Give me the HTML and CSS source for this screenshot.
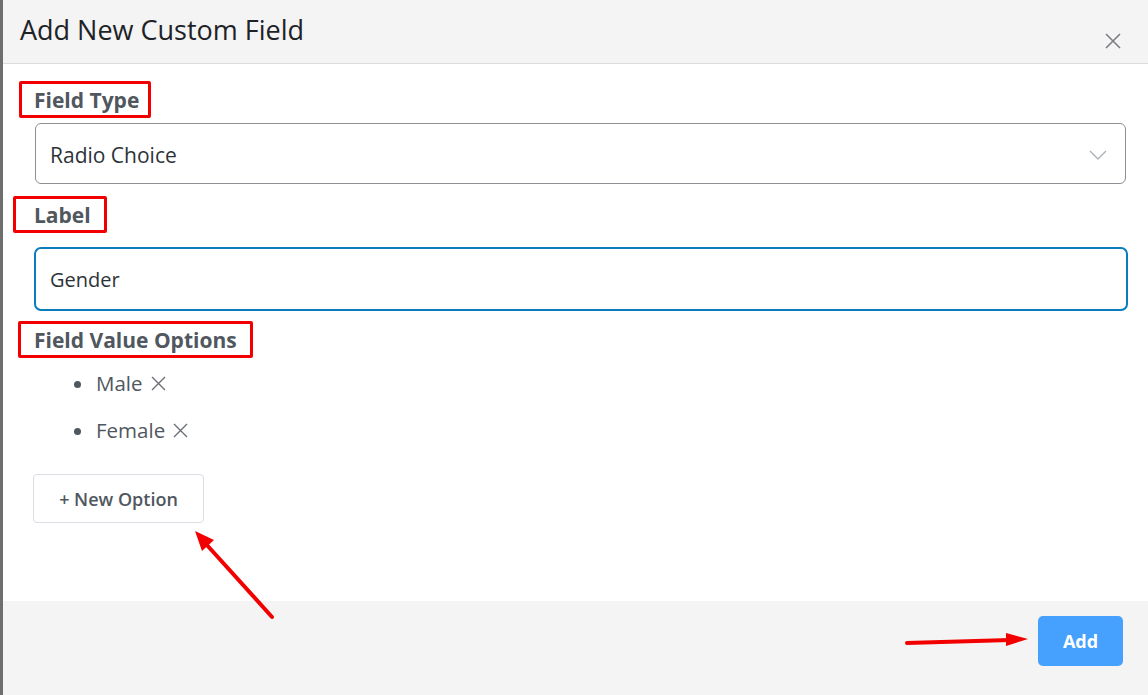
FILE: index.html
```html
<!DOCTYPE html>
<html lang="en">
<head>
<meta charset="utf-8">
<title>Add New Custom Field</title>
<link rel="stylesheet" href="styles.css">
</head>
<body>
<div class="screen">
  <div class="backdrop-edge"></div>
  <div class="modal">
    <header class="modal-header">
      <h1 class="modal-title">Add New Custom Field</h1>
      <button class="close-btn" aria-label="Close">
        <svg width="18" height="18" viewBox="0 0 18 18"><path d="M2 2L16 16M16 2L2 16" stroke="#7b7f85" stroke-width="1.6" fill="none"/></svg>
      </button>
    </header>
    <main class="modal-body">
      <div class="field-label label-type"><span class="mark mark-type"></span>Field Type</div>
      <div class="select">
        <span class="select-value">Radio Choice</span>
        <svg class="chevron" width="18" height="10" viewBox="0 0 18 10"><path d="M1 1L9 9L17 1" stroke="#a9b4bd" stroke-width="1.4" fill="none"/></svg>
      </div>
      <div class="field-label label-label"><span class="mark mark-label"></span>Label</div>
      <div class="text-input">Gender</div>
      <div class="field-label label-options"><span class="mark mark-options"></span>Field Value Options</div>
      <ul class="options">
        <li class="option">Male <svg class="remove" width="15" height="15" viewBox="0 0 15 15"><path d="M1 1L14 14M14 1L1 14" stroke="#6b7076" stroke-width="1.4" fill="none"/></svg></li>
        <li class="option">Female <svg class="remove" width="15" height="15" viewBox="0 0 15 15"><path d="M1 1L14 14M14 1L1 14" stroke="#6b7076" stroke-width="1.4" fill="none"/></svg></li>
      </ul>
      <button class="new-option">+ New Option</button>
    </main>
    <footer class="modal-footer">
      <button class="add-btn">Add</button>
    </footer>
  </div>
  <svg class="annotations" width="1148" height="695" viewBox="0 0 1148 695">
    <line x1="272" y1="617" x2="206" y2="544" stroke="#f20000" stroke-width="4" stroke-linecap="round"/>
    <polygon points="195,531 214,540 202,551" fill="#f20000"/>
    <line x1="907" y1="643" x2="1010" y2="640" stroke="#f20000" stroke-width="4" stroke-linecap="round"/>
    <polygon points="1028,639 1006,633 1006,646" fill="#f20000"/>
  </svg>
</div>
</body>
</html>
```
FILE: styles.css
```css
* { box-sizing: border-box; }
html, body { margin: 0; padding: 0; }
body {
  font-family: "Open Sans", "Noto Sans", sans-serif;
  background: #fff;
  width: 1148px;
  height: 695px;
  overflow: hidden;
}
.screen {
  position: relative;
  display: flex;
  width: 1148px;
  height: 695px;
}
.backdrop-edge {
  width: 3px;
  background: #6e6e6e;
  flex: none;
}
.modal {
  flex: 1;
  display: flex;
  flex-direction: column;
  background: #fff;
}
.modal-header {
  height: 64px;
  flex: none;
  background: #f4f4f4;
  border-bottom: 1px solid #dcdcde;
  display: flex;
  justify-content: space-between;
  align-items: flex-start;
  padding: 0 26px 0 17px;
}
.modal-title {
  margin: 12px 0 0;
  font-size: 27px;
  font-weight: 400;
  color: #1d2327;
  line-height: 36px;
}
.close-btn {
  margin-top: 32px;
  background: none;
  border: 0;
  padding: 0;
  width: 18px;
  height: 18px;
  display: flex;
}
.modal-body {
  flex: 1;
  padding: 22px 22px 0 31px;
}
.field-label {
  position: relative;
  font-size: 21px;
  font-weight: 700;
  color: #50575e;
  line-height: 28px;
  height: 28px;
}
.mark {
  position: absolute;
  border: 3px solid #f20000;
  border-radius: 2px;
  top: -5px;
  bottom: -4px;
}
.mark-type { left: -15px; width: 132px; }
.mark-label { left: -21px; width: 94px; }
.mark-options { left: -16px; width: 235px; }
.label-type { margin-bottom: 9px; }
.select {
  height: 61px;
  margin-left: 1px;
  border: 1px solid #8c8f94;
  border-radius: 6px;
  display: flex;
  align-items: center;
  justify-content: space-between;
  padding: 0 18px 0 14px;
  margin-bottom: 17px;
}
.select-value {
  font-size: 21px;
  color: #2c3338;
  line-height: 30px;
  margin-top: 2px;
}
.text-input {
  font-size: 20px;
  color: #2c3338;
}
.chevron { margin-top: 2px; }
.label-label { margin-bottom: 18px; }
.text-input {
  height: 64px;
  border: 2px solid #0a7cbb;
  border-radius: 7px;
  display: flex;
  align-items: center;
  padding-left: 14px;
  margin-right: -2px;
  margin-bottom: 15px;
}
.options {
  list-style: none;
  margin: 6px 0 0;
  padding: 0 0 0 40px;
}
.option {
  position: relative;
  height: 47px;
  line-height: 47px;
  font-size: 20.5px;
  color: #50575e;
  display: flex;
  align-items: center;
  padding-left: 22px;
}
.option::before {
  content: "";
  position: absolute;
  left: 0;
  top: 21px;
  width: 7px;
  height: 7px;
  border-radius: 50%;
  background: #50575e;
}
.remove { margin-left: 8px; }
.new-option {
  margin-top: 20px;
  margin-left: -1px;
  width: 171px;
  height: 49px;
  background: #fff;
  border: 1px solid #dcdce4;
  border-radius: 4px;
  font-family: inherit;
  font-size: 18px;
  font-weight: 600;
  color: #50575e;
}
.modal-footer {
  height: 94px;
  flex: none;
  background: #f4f4f4;
  display: flex;
  justify-content: flex-end;
  align-items: flex-start;
  padding: 15px 25px 0 0;
}
.add-btn {
  width: 85px;
  height: 50px;
  background: #45a1fd;
  color: #fff;
  border: 0;
  border-radius: 5px;
  font-family: inherit;
  font-size: 18px;
  font-weight: 700;
}
.annotations {
  position: absolute;
  left: 0;
  top: 0;
  pointer-events: none;
}
```
